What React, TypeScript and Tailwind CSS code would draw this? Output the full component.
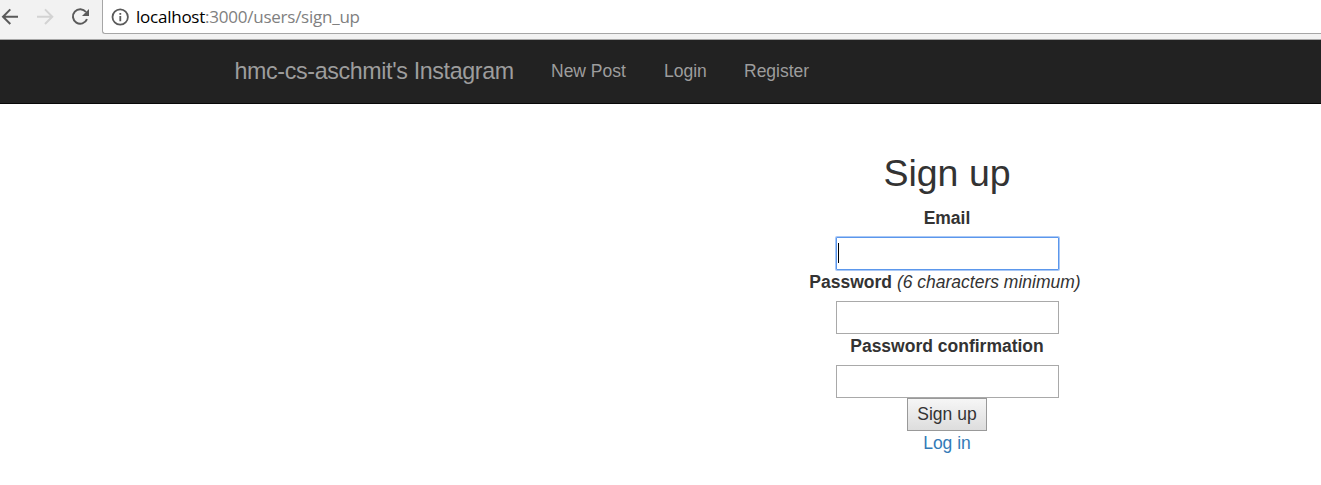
import React from "react";

const inputClass =
  "h-[33px] w-[223px] border border-[#a9a9a9] bg-white px-0.5 outline-none";

function BrowserBar() {
  return (
    <div className="flex h-10 w-full overflow-hidden border-b border-[#a6a6a6] bg-[#f2f2f2]">
      <div className="flex h-[34px] w-[102px] shrink-0 items-center">
        <svg width="102" height="34" viewBox="0 0 102 34" fill="none" strokeWidth="2">
          <path d="M18 16.7H3.3M10.3 9.4L3 16.7L10.3 24" stroke="#5a5a5a" />
          <path d="M37 16.7H52M45 9.4L52.3 16.7L45 24" stroke="#d3d3d3" />
          <path d="M86 12A7.3 7.3 0 1 0 87 19.2" stroke="#5a5a5a" />
          <path d="M89 9V16H82Z" fill="#5a5a5a" />
        </svg>
      </div>
      <div className="flex h-[34px] min-w-0 flex-1 items-center rounded-bl-[3px] border-b border-l border-[#a6a6a6] bg-white pl-[8px]">
        <svg width="18" height="18" viewBox="0 0 18 18" fill="none" className="mt-px shrink-0">
          <circle cx="9.2" cy="9" r="7.7" stroke="#5a5a5a" strokeWidth="1.8" />
          <path d="M9.3 8V13.2M9.3 5V6.8" stroke="#5a5a5a" strokeWidth="1.8" />
        </svg>
        <span className="ml-[7px] whitespace-nowrap font-['Open_Sans',sans-serif] text-[17px] leading-6 tracking-[-0.24px] text-[#808080]">
          <span className="text-black">localhost</span>:3000/users/sign_up
        </span>
      </div>
    </div>
  );
}

function NavBar() {
  return (
    <nav className="flex h-16 items-center border-b border-[#080808] bg-[#222] pl-[234.5px] text-[17.5px] text-[#9d9d9d]">
      <a className="mb-px w-[316.5px] whitespace-nowrap text-[23.25px] tracking-[-0.36px]">hmc-cs-aschmit's Instagram</a>
      <a className="w-[113px] whitespace-nowrap">New Post</a>
      <a className="w-[80px]">Login</a>
      <a>Register</a>
    </nav>
  );
}

export default function App() {
  return (
    <div className="min-h-[485px] bg-white font-['Liberation_Sans',Arial,sans-serif] text-[17.5px] leading-[25px] text-[#333]">
      <BrowserBar />
      <NavBar />
      <main className="flex pl-[797px] pt-[49px]">
        <form className="flex w-[300px] flex-col items-center">
          <h2 className="mb-[12px] text-[37.5px] leading-[41px]">Sign up</h2>
          <label className="mb-[6px] font-bold">Email</label>
          <div className="flex h-[33px] w-[223px] items-start rounded-[1px] border border-[#5b97ec] bg-white pl-px pt-[5px] shadow-[0_0_0_1px_#a9c8f6]">
            <span className="h-5 w-px bg-black" />
          </div>
          <div className="mb-[6px] pr-[4px]">
            <label className="font-bold">Password</label> <em>(6 characters minimum)</em>
          </div>
          <input type="password" className={inputClass} />
          <label className="mb-[6px] font-bold">Password confirmation</label>
          <input type="password" className={inputClass} />
          <button
            type="button"
            className="h-[33px] w-[80px] border border-[#999] bg-linear-to-b from-[#f6f6f6] to-[#dddddd] leading-[25px]"
          >
            Sign up
          </button>
          <a className="text-[#337ab7]">Log in</a>
        </form>
      </main>
    </div>
  );
}
